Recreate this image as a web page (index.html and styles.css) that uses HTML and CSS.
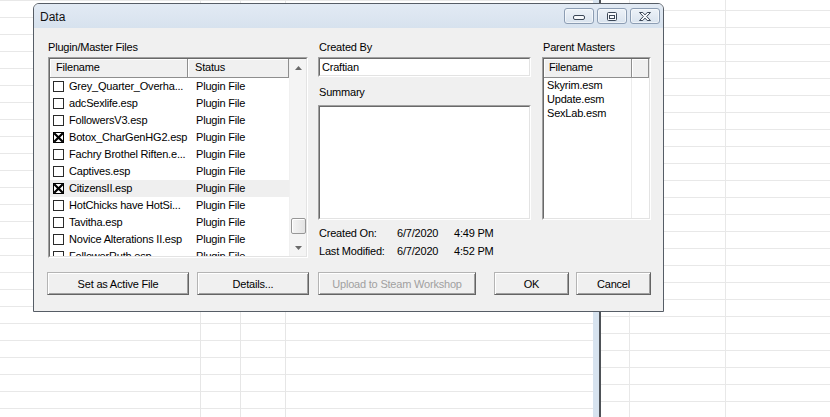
FILE: index.html
```html
<!DOCTYPE html>
<html>
<head>
<meta charset="utf-8">
<title>Data</title>
<link rel="stylesheet" href="styles.css">
</head>
<body>
<div class="desk">
  <div class="backwin"><div class="backwin-client"></div></div>

  <div class="dialog">
    <div class="titlebar">
      <span class="title">Data</span>
      <div class="caption-btns">
        <span class="cbtn"><svg width="30" height="16" viewBox="0 0 30 16"><rect x="9.5" y="7.5" width="11" height="4" rx="1.5" fill="#f7f9fc" stroke="#3b4757"/></svg></span>
        <span class="cbtn"><svg width="30" height="16" viewBox="0 0 30 16"><rect x="10.5" y="4.5" width="9" height="8" rx="1" fill="#f7f9fc" stroke="#3b4757"/><rect x="12.5" y="7.5" width="5" height="3" fill="none" stroke="#3b4757"/></svg></span>
        <span class="cbtn"><svg width="30" height="16" viewBox="0 0 30 16"><polygon points="9.5,4.5 12.8,4.5 15,6.9 17.2,4.5 20.5,4.5 16.7,8.5 20.5,12.5 17.2,12.5 15,10.1 12.8,12.5 9.5,12.5 13.3,8.5" fill="#f7f9fc" stroke="#3b4757" stroke-linejoin="round"/></svg></span>
      </div>
    </div>

    <div class="client">
      <div class="cols">
        <section class="col col-left">
          <div class="label label-first">Plugin/Master Files</div>
          <div class="sunken plugins">
            <div class="sunken-in plugins-in">
              <div class="lv">
                <div class="lv-head">
                  <div class="h h-name">Filename</div>
                  <div class="h h-status">Status</div>
                </div>
                <div class="lv-rows">
                  <div class="row"><div class="c-name"><span class="cb"></span><span class="fn">Grey_Quarter_Overha...</span></div><div class="c-status">Plugin File</div></div>
                  <div class="row"><div class="c-name"><span class="cb"></span><span class="fn">adcSexlife.esp</span></div><div class="c-status">Plugin File</div></div>
                  <div class="row"><div class="c-name"><span class="cb"></span><span class="fn">FollowersV3.esp</span></div><div class="c-status">Plugin File</div></div>
                  <div class="row"><div class="c-name"><svg class="cbx" width="11" height="11" viewBox="0 0 11 11"><rect x="0.5" y="0.5" width="10" height="10" fill="#fff" stroke="#000"/><path d="M1.2 1.2 L9.8 9.8 M9.8 1.2 L1.2 9.8" stroke="#000" stroke-width="2.2"/></svg><span class="fn">Botox_CharGenHG2.esp</span></div><div class="c-status">Plugin File</div></div>
                  <div class="row"><div class="c-name"><span class="cb"></span><span class="fn">Fachry Brothel Riften.e...</span></div><div class="c-status">Plugin File</div></div>
                  <div class="row"><div class="c-name"><span class="cb"></span><span class="fn">Captives.esp</span></div><div class="c-status">Plugin File</div></div>
                  <div class="row row-hot"><div class="c-name"><svg class="cbx" width="11" height="11" viewBox="0 0 11 11"><rect x="0.5" y="0.5" width="10" height="10" fill="#fff" stroke="#000"/><path d="M1.2 1.2 L9.8 9.8 M9.8 1.2 L1.2 9.8" stroke="#000" stroke-width="2.2"/></svg><span class="fn">CitizensII.esp</span></div><div class="c-status">Plugin File</div></div>
                  <div class="row"><div class="c-name"><span class="cb"></span><span class="fn">HotChicks have HotSi...</span></div><div class="c-status">Plugin File</div></div>
                  <div class="row"><div class="c-name"><span class="cb"></span><span class="fn">Tavitha.esp</span></div><div class="c-status">Plugin File</div></div>
                  <div class="row"><div class="c-name"><span class="cb"></span><span class="fn">Novice Alterations II.esp</span></div><div class="c-status">Plugin File</div></div>
                  <div class="row"><div class="c-name"><span class="cb"></span><span class="fn">FollowerRuth.esp</span></div><div class="c-status">Plugin File</div></div>
                </div>
              </div>
              <div class="vscroll">
                <div class="sb-btn"><svg width="7" height="4" viewBox="0 0 7 4"><polygon points="3.5,0 7,4 0,4" fill="#6a6a6a"/></svg></div>
                <div class="sb-track"><div class="sb-thumb"></div></div>
                <div class="sb-btn"><svg width="7" height="4" viewBox="0 0 7 4"><polygon points="0,0 7,0 3.5,4" fill="#6a6a6a"/></svg></div>
              </div>
            </div>
          </div>
        </section>

        <section class="col col-mid">
          <div class="label">Created By</div>
          <div class="sunken field"><div class="sunken-in field-in">Craftian</div></div>
          <div class="label label-summary">Summary</div>
          <div class="sunken summary"><div class="sunken-in"></div></div>
          <div class="dates">
            <span>Created On:</span><span>6/7/2020</span><span>4:49 PM</span>
            <span>Last Modified:</span><span>6/7/2020</span><span>4:52 PM</span>
          </div>
        </section>

        <section class="col col-right">
          <div class="label">Parent Masters</div>
          <div class="sunken masters">
            <div class="sunken-in masters-in">
              <div class="lv-head">
                <div class="h pm-name">Filename</div>
                <div class="h pm-rest"></div>
              </div>
              <div class="pm-body">
                <div class="pm-col">
                  <div class="pm-row">Skyrim.esm</div>
                  <div class="pm-row">Update.esm</div>
                  <div class="pm-row">SexLab.esm</div>
                </div>
                <div class="pm-col2"></div>
              </div>
            </div>
          </div>
        </section>
      </div>

      <div class="buttons">
        <button class="btn b-active">Set as Active File</button>
        <button class="btn b-details">Details...</button>
        <button class="btn b-upload" disabled>Upload to Steam Workshop</button>
        <button class="btn b-ok">OK</button>
        <button class="btn b-cancel">Cancel</button>
      </div>
    </div>
  </div>
</div>
</body>
</html>
```

FILE: styles.css
```css
* { box-sizing: border-box; }
html, body { margin: 0; padding: 0; }
body {
  width: 830px;
  height: 417px;
  overflow: hidden;
  font-family: "Liberation Sans", Arial, sans-serif;
  font-size: 11px;
  letter-spacing: -0.2px;
  color: #000;
  background: #fff;
}

/* desktop / spreadsheet behind */
.desk {
  position: relative;
  width: 830px;
  height: 417px;
  background-color: #fff;
  background-image:
    linear-gradient(#e6e6e6, #e6e6e6),
    linear-gradient(#e6e6e6, #e6e6e6),
    linear-gradient(#e6e6e6, #e6e6e6),
    linear-gradient(to bottom, transparent 16px, #e8e8e8 16px);
  background-size: 1px 100%, 1px 100%, 1px 100%, 100% 17px;
  background-position: 200px 0, 240px 0, 285px 0, 0 1px;
  background-repeat: no-repeat, no-repeat, no-repeat, repeat;
}

.backwin {
  position: absolute;
  left: 593px;
  top: 0;
  width: 237px;
  height: 417px;
  background: #d7e3ef;
  padding-left: 6px;
}
.backwin-client {
  height: 100%;
  border-left: 2px solid #4e5257;
  background-color: #fff;
  background-image:
    linear-gradient(#e8e8e8, #e8e8e8),
    linear-gradient(#e8e8e8, #e8e8e8),
    linear-gradient(to bottom, transparent 16px, #e8e8e8 16px);
  background-size: 1px 100%, 1px 100%, 100% 17px;
  background-position: 28px 0, 124px 0, 0 11px;
  background-repeat: no-repeat, no-repeat, repeat;
}

/* dialog */
.dialog {
  position: absolute;
  left: 33px;
  top: 3px;
  width: 631px;
  height: 309px;
  border: 1px solid #565d66;
  border-radius: 6px 6px 0 0;
  background: #f0f0f0;
  display: flex;
  flex-direction: column;
  overflow: hidden;
}
.titlebar {
  flex: none;
  height: 24px;
  display: flex;
  align-items: flex-start;
  padding: 4px 3px 0 6px;
  background: linear-gradient(#e2eaf4, #d7e2ee);
}
.title {
  font-size: 12px;
  letter-spacing: 0;
  line-height: 16px;
  margin-top: 1px;
  color: #111;
}
.caption-btns {
  margin-left: auto;
  display: flex;
  gap: 3px;
}
.cbtn {
  width: 30px;
  height: 16px;
  border: 1px solid #8c9db3;
  border-radius: 3px;
  background: linear-gradient(#edf2f8, #d9e3ee);
  box-shadow: inset 0 0 0 1px rgba(255, 255, 255, 0.55);
  position: relative;
}
.cbtn svg {
  position: absolute;
  left: -1px;
  top: -1px;
  display: block;
}

.client {
  flex: 1;
  padding: 12px 0 0 14px;
}
.cols {
  display: flex;
  align-items: flex-start;
  height: 218px;
}
.col { display: flex; flex-direction: column; }
.col-left { width: 260px; }
.col-mid { width: 213px; margin-left: 10px; }
.col-right { width: 109px; margin-left: 11px; }

.label {
  height: 14px;
  line-height: 14px;
  margin-bottom: 3px;
  padding-left: 1px;
  white-space: nowrap;
}
.label-first { padding-left: 0; }
.label-summary { margin-top: 8px; margin-bottom: 6px; }

/* sunken 3D boxes */
.sunken {
  border: 1px solid;
  border-color: #a0a0a0 #ffffff #ffffff #a0a0a0;
  background: #fff;
}
.sunken-in {
  height: 100%;
  border: 1px solid;
  border-color: #696969 #e3e3e3 #e3e3e3 #696969;
  background: #fff;
  overflow: hidden;
}

/* plugin list */
.plugins { height: 201px; }
.plugins-in { display: flex; }
.lv { flex: 1; display: flex; flex-direction: column; min-width: 0; }
.lv-head {
  flex: none;
  display: flex;
  height: 19px;
}
.h {
  height: 19px;
  line-height: 17px;
  background: #f0f0f0;
  border-right: 1px solid #8e8e8e;
  border-bottom: 1px solid #8e8e8e;
  box-shadow: inset 1px 1px 0 #ffffff;
  white-space: nowrap;
}
.h-name { width: 138px; padding-left: 6px; }
.h-status { flex: 1; padding-left: 7px; }

.lv-rows { flex: 1; overflow: hidden; }
.row {
  display: flex;
  height: 17px;
  line-height: 17px;
  white-space: nowrap;
}
.row-hot { background: #efefef; }
.c-name {
  width: 138px;
  display: flex;
  align-items: center;
  padding-left: 3px;
  overflow: hidden;
}
.c-status { flex: 1; padding-left: 8px; }
.cb {
  flex: none;
  width: 11px;
  height: 11px;
  border: 1px solid #2a2a2a;
  background: #fff;
}
.cbx { flex: none; display: block; }
.fn { margin-left: 5px; }

.vscroll {
  width: 17px;
  flex: none;
  display: flex;
  flex-direction: column;
  background: #f4f4f4;
  border-left: 1px solid #f0f0f0;
}
.sb-btn {
  height: 17px;
  flex: none;
  display: flex;
  align-items: center;
  justify-content: center;
}
.sb-btn svg { display: block; }
.sb-track {
  flex: 1;
  padding-top: 142px;
  padding-left: 1px;
}
.sb-thumb {
  width: 15px;
  height: 16px;
  border: 1px solid #979797;
  border-radius: 2px;
  background: linear-gradient(to right, #f4f4f4, #e3e3e3);
  box-shadow: inset 1px 1px 0 #fff;
}

/* middle column */
.field { height: 20px; }
.field-in {
  padding-left: 2px;
  line-height: 16px;
  white-space: nowrap;
}
.summary { height: 115px; }
.dates {
  margin-top: 4px;
  display: grid;
  grid-template-columns: 78px 57px auto;
  line-height: 18px;
  padding-left: 1px;
  white-space: nowrap;
}

/* parent masters list */
.masters { height: 163px; }
.masters-in { display: flex; flex-direction: column; }
.pm-name { width: 88px; padding-left: 5px; }
.pm-rest { flex: 1; }
.pm-body { flex: 1; display: flex; }
.pm-col {
  width: 88px;
  border-right: 1px solid #ececec;
}
.pm-col2 { flex: 1; }
.pm-row {
  height: 14px;
  line-height: 14px;
  padding-left: 3px;
  white-space: nowrap;
}

/* buttons */
.buttons {
  display: flex;
  margin-top: 14px;
  margin-left: -1px;
}
.btn {
  height: 23px;
  padding: 0;
  font-family: "Liberation Sans", Arial, sans-serif;
  font-size: 11px;
  letter-spacing: -0.2px;
  color: #000;
  background: #f0f0f0;
  border: 1px solid;
  border-color: #b4b4b4 #646464 #646464 #b4b4b4;
  box-shadow: inset 1px 1px 0 #ffffff, inset -1px -1px 0 #a0a0a0;
  border-radius: 0;
}
.btn:disabled { color: #a0a0a0; }
.b-active { width: 142px; }
.b-details { width: 112px; margin-left: 8px; }
.b-upload { width: 158px; margin-left: 9px; }
.b-ok { width: 75px; margin-left: 18px; }
.b-cancel { width: 75px; margin-left: 7px; }
```
